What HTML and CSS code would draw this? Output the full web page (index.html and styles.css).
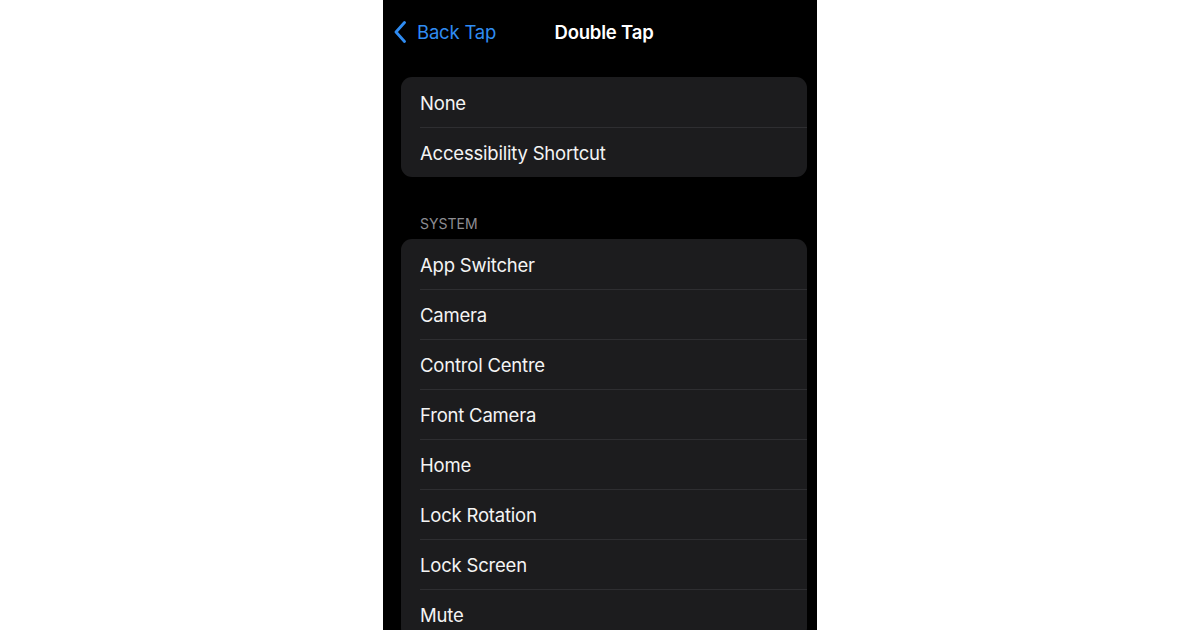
FILE: index.html
```html
<!DOCTYPE html>
<html>
<head>
<meta charset="utf-8">
<link rel="stylesheet" href="styles.css">
</head>
<body>
<div class="screen">
  <div class="nav">
    <div class="back">
      <svg class="chev" width="14" height="22" viewBox="0 0 14 22"><path d="M11.5 1.5 L3 11 L11.5 20.5" fill="none" stroke="#2f8cf2" stroke-width="2.8" stroke-linecap="round" stroke-linejoin="round"/></svg>
      <span>Back Tap</span>
    </div>
    <div class="title">Double Tap</div>
  </div>
  <div class="card first">
    <div class="row">None</div>
    <div class="row">Accessibility Shortcut</div>
  </div>
  <div class="section">SYSTEM</div>
  <div class="card">
    <div class="row">App Switcher</div>
    <div class="row">Camera</div>
    <div class="row">Control Centre</div>
    <div class="row">Front Camera</div>
    <div class="row">Home</div>
    <div class="row">Lock Rotation</div>
    <div class="row">Lock Screen</div>
    <div class="row">Mute</div>
  </div>
</div>
</body>
</html>
```
FILE: styles.css
```css
html, body {
  margin: 0;
  padding: 0;
  background: #ffffff;
  height: 630px;
  overflow: hidden;
}
body {
  display: flex;
  justify-content: center;
  font-family: Inter, "Liberation Sans", sans-serif;
}
.screen {
  width: 434px;
  height: 630px;
  background: #000;
  overflow: hidden;
  box-sizing: border-box;
  padding: 0 10px 0 18px;
}
.nav {
  position: relative;
  height: 64px;
  display: flex;
  align-items: center;
}
.back {
  display: flex;
  align-items: center;
  color: #2f8cf2;
  font-size: 18.5px;
  letter-spacing: -0.2px;
  margin-left: -8px;
  gap: 10px;
}
.title {
  position: absolute;
  left: 0;
  right: 0;
  top: 0;
  bottom: 0;
  display: flex;
  align-items: center;
  justify-content: center;
  color: #fff;
  font-weight: 600;
  font-size: 18.5px;
  letter-spacing: -0.2px;
  pointer-events: none;
}
.card {
  background: #1c1c1e;
  border-radius: 11px;
  overflow: hidden;
}
.card.first {
  margin-top: 13px;
}
.row {
  height: 50px;
  line-height: 50px;
  margin-left: 19px;
  color: #f4f4f4;
  font-size: 18.5px;
  letter-spacing: -0.2px;
  border-top: 1px solid #2e2e31;
  box-sizing: border-box;
}
.row:first-child {
  border-top: none;
  line-height: 52px;
}
.section {
  color: #8d8d92;
  font-size: 14px;
  padding: 38px 0 0 19px;
  height: 62px;
  box-sizing: border-box;
}
```
